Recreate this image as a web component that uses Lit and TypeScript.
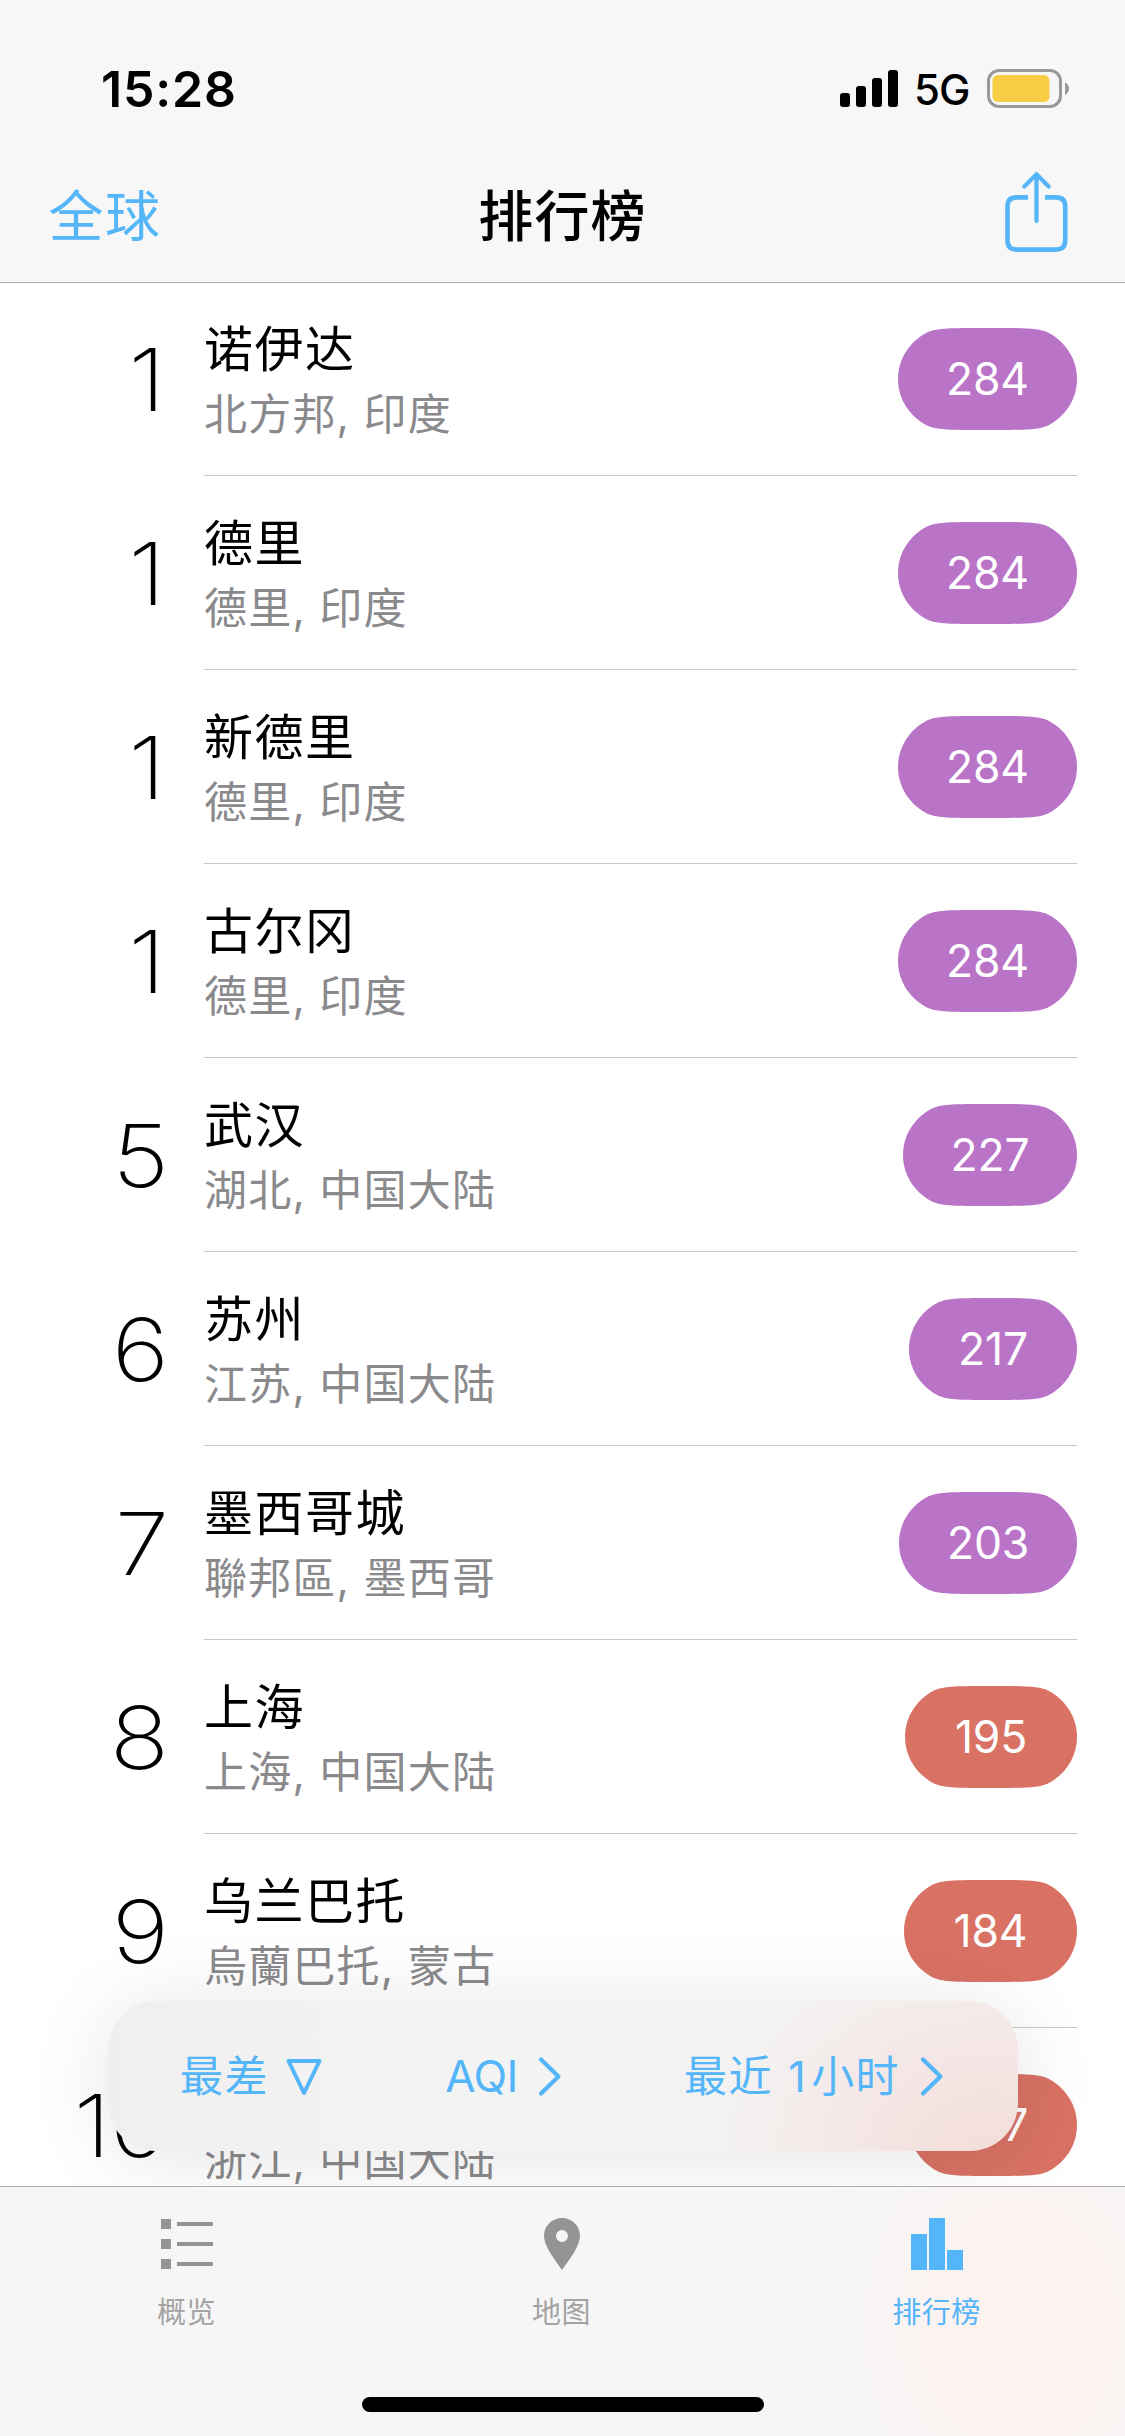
import { LitElement, html, svg, css } from "lit";
import { customElement, property } from "lit/decorators.js";
import { classMap } from "lit/directives/class-map.js";
import { styleMap } from "lit/directives/style-map.js";

interface City {
  rank: number;
  name: string;
  region: string;
  aqi: number;
  level: "purple" | "red";
  width: number;
}

const CITIES: City[] = [
  { rank: 1, name: "诺伊达", region: "北方邦, 印度", aqi: 284, level: "purple", width: 179 },
  { rank: 1, name: "德里", region: "德里, 印度", aqi: 284, level: "purple", width: 179 },
  { rank: 1, name: "新德里", region: "德里, 印度", aqi: 284, level: "purple", width: 179 },
  { rank: 1, name: "古尔冈", region: "德里, 印度", aqi: 284, level: "purple", width: 179 },
  { rank: 5, name: "武汉", region: "湖北, 中国大陆", aqi: 227, level: "purple", width: 174 },
  { rank: 6, name: "苏州", region: "江苏, 中国大陆", aqi: 217, level: "purple", width: 168 },
  { rank: 7, name: "墨西哥城", region: "聯邦區, 墨西哥", aqi: 203, level: "purple", width: 178 },
  { rank: 8, name: "上海", region: "上海, 中国大陆", aqi: 195, level: "red", width: 172 },
  { rank: 9, name: "乌兰巴托", region: "烏蘭巴托, 蒙古", aqi: 184, level: "red", width: 173 },
  { rank: 10, name: "杭州", region: "浙江, 中国大陆", aqi: 167, level: "red", width: 168 },
];

const FONT = css`
  font-family: Inter, "Noto Sans CJK SC", sans-serif;
`;

@customElement("status-bar")
class StatusBar extends LitElement {
  static styles = css`
    :host { display: flex; justify-content: space-between; height: 150px; ${FONT} }
    .time { margin: 59px 0 0 101px; height: 60px; line-height: 60px; font-size: 50px; font-weight: 600; letter-spacing: 0.8px; color: #000; }
    .right { display: flex; align-items: flex-start; padding: 68px 55px 0 0; }
    .signal { width: 58px; height: 40px; }
    .net { margin: -6px 0 0 16px; width: 58px; height: 56px; line-height: 56px; font-size: 42px; font-weight: 450; letter-spacing: -1px; white-space: nowrap; }
    .battery { margin-left: 14px; width: 84px; height: 42px; }
  `;
  render() {
    return html`
      <span class="time">15:28</span>
      <div class="right">
        <svg class="signal" viewBox="0 0 58 40">
          <rect x="0" y="25" width="10" height="14" rx="3" />
          <rect x="16" y="18" width="10" height="21" rx="3" />
          <rect x="32" y="10" width="10" height="29" rx="3" />
          <rect x="48" y="2" width="10" height="37" rx="3" />
        </svg>
        <span class="net">5G</span>
        <svg class="battery" viewBox="0 0 84 42">
          <rect x="2.5" y="2.5" width="72" height="36" rx="10.5" fill="none" stroke="#999" stroke-width="3" />
          <rect x="6.5" y="7" width="57" height="27" rx="5.5" fill="#f6cd45" />
          <path d="M79 14.5c2.6 1.2 4 3.600 4 6.200s-1.400 5-4 6.200z" fill="#999" />
        </svg>
      </div>
    `;
  }
}

@customElement("nav-bar")
class NavBar extends LitElement {
  static styles = css`
    :host { display: grid; grid-template-columns: 1fr auto 1fr; align-items: center; height: 132px; ${FONT} }
    .scope { padding-left: 48.500px; font-size: 55px; line-height: 80px; letter-spacing: 1.500px; color: #54b5f9; font-weight: 400; }
    .title { margin-top: -1px; font-size: 55px; line-height: 80px; letter-spacing: 1.200px; color: #000; font-weight: 500; }
    .share { justify-self: end; margin: -2px 53px 0 0; width: 72px; height: 90px; }
  `;
  render() {
    return html`
      <span class="scope">全球</span>
      <span class="title">排行榜</span>
      <svg class="share" viewBox="0 0 72 90" fill="none" stroke="#54b5f9" stroke-width="4.600">
        <path d="M28 27.400H16.500Q7.500 27.400 7.500 36.400V70.600Q7.500 79.600 16.500 79.600H56.200Q65.200 79.600 65.200 70.600V36.400Q65.200 27.400 56.200 27.400H45" />
        <path d="M36.500 51V4M24.300 16.500L36.500 4.300L48.700 16.500" stroke-linecap="round" stroke-linejoin="round" stroke-width="4.200" />
      </svg>
    `;
  }
}

@customElement("aqi-badge")
class AqiBadge extends LitElement {
  @property({ type: Number }) value = 0;
  @property({ type: Number }) width = 170;
  @property() level = "purple";
  static styles = css`
    :host { display: block; ${FONT} }
    .pill { position: relative; display: flex; align-items: center; justify-content: center; height: 102px; }
    .shape { position: absolute; inset: 0; }
    .purple { fill: #b974c8; }
    .red { fill: #d97265; }
    .num { position: relative; color: #fff; font-size: 44.500px; line-height: 60px; font-weight: 380; letter-spacing: -0.200px; }
  `;
  render() {
    const w = this.width;
    const d = `M0 51C0 31 11.500 13.500 29 4.500C38 .5 50 0 78 0H${w - 78}C${w - 50} 0 ${w - 38} .5 ${w - 29} 4.500C${w - 11.5} 13.500 ${w} 31 ${w} 51C${w} 71 ${w - 11.5} 88.500 ${w - 29} 97.500C${w - 38} 101.500 ${w - 50} 102 ${w - 78} 102H78C50 102 38 101.500 29 97.500C11.500 88.500 0 71 0 51Z`;
    return html`
      <div class="pill" style=${styleMap({ width: `${w}px` })}>
        <svg class="shape" width=${w} height="102"><path class=${this.level} d=${d} /></svg>
        <span class="num">${this.value}</span>
      </div>
    `;
  }
}

@customElement("city-row")
class CityRow extends LitElement {
  @property({ attribute: false }) city!: City;
  static styles = css`
    :host { display: flex; height: 194px; ${FONT} }
    .rank { flex: none; width: 168px; margin-right: 36px; padding-top: 1px; box-sizing: border-box; text-align: right; font-size: 87px; line-height: 194px; font-weight: 180; letter-spacing: -1px; color: #000; transform: scaleX(1.13); transform-origin: right; }
    .rank.first { padding-right: 3px; }
    .body { flex: 1; display: flex; justify-content: space-between; align-items: center; margin-right: 48px; border-bottom: 1px solid #c6c6c8; }
    .texts { display: flex; flex-direction: column; padding-top: 6px; white-space: nowrap; }
    .name { font-size: 49px; line-height: 64px; letter-spacing: 1.500px; color: #000; }
    .region { font-size: 43px; line-height: 64px; letter-spacing: 1.200px; color: #8a8a8d; font-weight: 400; }
  `;
  render() {
    const c = this.city;
    return html`
      <span class=${classMap({ rank: true, first: c.rank === 1 })}>${c.rank}</span>
      <div class="body">
        <div class="texts">
          <span class="name">${c.name}</span>
          <span class="region">${c.region}</span>
        </div>
        <aqi-badge .value=${c.aqi} .width=${c.width} .level=${c.level}></aqi-badge>
      </div>
    `;
  }
}

@customElement("filter-bar")
class FilterBar extends LitElement {
  static styles = css`
    :host { display: block; ${FONT} }
    .panel {
      display: flex; align-items: center; justify-content: space-between; box-sizing: border-box;
      width: 910px; height: 150px; padding: 0 74px 0 72px; border-radius: 48px;
      background:
        radial-gradient(ellipse 350px 280px at 880px 150px, rgba(243, 219, 215, 0.9), rgba(244, 225, 223, 0.65) 40%, rgba(244, 236, 235, 0.3) 75%, rgba(244, 244, 244, 0)),
        linear-gradient(90deg, #efefef, #f3f3f3 35%, #f4f4f4);
      box-shadow: 0 6px 85px rgba(0, 0, 0, 0.110);
    }
    .item { display: flex; align-items: center; color: #54b5f9; font-size: 43px; line-height: 60px; letter-spacing: 1.400px; white-space: nowrap; }
    .latin { font-size: 44px; letter-spacing: -0.600px; }
    .one { margin-right: 4px; }
    .gap { margin-right: 2px; }
    .tri { width: 38px; height: 40px; margin-left: 16px; }
    .chev { width: 24px; height: 42px; margin-left: 20px; }
  `;
  private chevron() {
    return html`<svg class="chev" viewBox="0 0 24 42" fill="none" stroke="#54b5f9" stroke-width="4.200" stroke-linecap="round" stroke-linejoin="round">
      ${svg`<path d="M3 4.500L20.500 21.500L3 38.500" />`}
    </svg>`;
  }
  render() {
    return html`
      <div class="panel">
        <span class="item">最差<svg class="tri" viewBox="0 0 38 40" fill="none" stroke="#54b5f9" stroke-width="4" stroke-linejoin="round"><path d="M3.500 5H34.500L19 37Z" /></svg></span>
        <span class="item"><span class="latin">AQI</span>${this.chevron()}</span>
        <span class="item"><span><span class="gap">最近</span> <span class="one">1</span>小时</span>${this.chevron()}</span>
      </div>
    `;
  }
}

@customElement("tab-bar")
class TabBar extends LitElement {
  static styles = css`
    :host {
      display: flex; flex-direction: column; align-items: center; box-sizing: border-box; height: 250px;
      border-top: 1px solid #acacac; ${FONT}
      background: radial-gradient(ellipse 230px 290px at 1020px 140px, #fcf2f0, rgba(252, 242, 240, 0.850) 35%, rgba(250, 244, 243, 0.400) 70%, rgba(247, 247, 247, 0)), #f6f6f6;
    }
    .tabs { display: grid; grid-template-columns: repeat(3, 1fr); width: 100%; height: 210px; }
    .tab { display: flex; flex-direction: column; align-items: center; color: #a3a3a3; }
    .tab.active { color: #54b5f9; }
    .icon { width: 60px; height: 60px; margin: 27px 1px 0 0; fill: #949494; }
    .active .icon { fill: #54b5f9; }
    .label { margin: 19px 2px 0 0; font-size: 29px; line-height: 40px; font-weight: 400; letter-spacing: 0.500px; }
    .home { width: 402px; height: 15px; border-radius: 8px; background: #000; }
  `;
  private tab(label: string, icon: unknown, active = false) {
    return html`<div class=${classMap({ tab: true, active })}>
      <svg class="icon" viewBox="0 0 60 60">${icon}</svg>
      <span class="label">${label}</span>
    </div>`;
  }
  render() {
    return html`
      <div class="tabs">
        ${this.tab("概览", svg`<path d="M4 5h10v10h-10zM4 25h10v10h-10zM4 45h10v10h-10zM20 8h36v4h-36zM20 28h36v4h-36zM20 48h36v4h-36z" />`)}
        ${this.tab("地图", svg`<path fill-rule="evenodd" d="M30 4C40 4 48 12 48 21.500C48 32 38.500 44 30 56C21.500 44 12 32 12 21.500C12 12 20 4 30 4ZM30 16a6 6 0 1 0 0 12a6 6 0 1 0 0-12Z" />`)}
        ${this.tab("排行榜", svg`<path d="M4 20h16v36h-16zM22 4h16v52h-16zM40 36h16v20h-16z" />`, true)}
      </div>
      <div class="home"></div>
    `;
  }
}

@customElement("app-root")
class AppRoot extends LitElement {
  static styles = css`
    :host { display: block; }
    .screen { position: relative; display: flex; flex-direction: column; width: 1125px; height: 2436px; overflow: hidden; background: #fff; }
    .header { position: relative; z-index: 2; flex: none; height: 282px; background: #f7f7f7; border-bottom: 1px solid #b0b0b0; }
    .list { flex: 1; min-height: 0; margin-top: -1px; overflow: hidden; }
    .floating { position: absolute; left: 108px; top: 2001px; z-index: 1; }
    .footer { position: relative; z-index: 2; flex: none; }
  `;
  render() {
    return html`
      <div class="screen">
        <div class="header">
          <status-bar></status-bar>
          <nav-bar></nav-bar>
        </div>
        <div class="list">${CITIES.map((c) => html`<city-row .city=${c}></city-row>`)}</div>
        <filter-bar class="floating"></filter-bar>
        <tab-bar class="footer"></tab-bar>
      </div>
    `;
  }
}
